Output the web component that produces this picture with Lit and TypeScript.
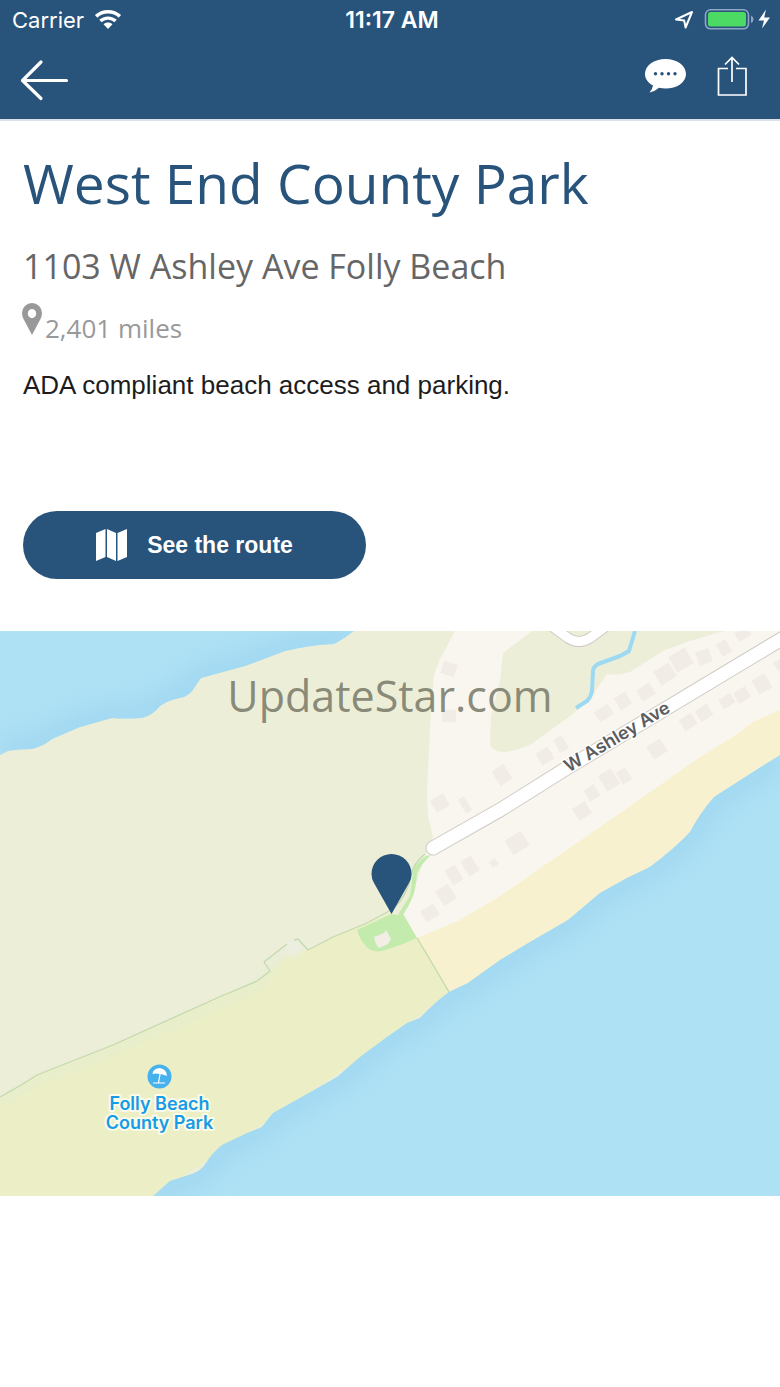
import { LitElement, html, svg, css } from "lit";
import { customElement, property } from "lit/decorators.js";

const COAST_NORTH =
  "M0 124L8 120Q18 118 32 118Q44 115 52 108L80 96L112 87Q124 88 142 87Q153 84 160 75Q168 69 184 66Q192 62 194 57L201 47L245 35L285 20Q310 14 334 13Q344 8 354 0";
const COAST_SOUTH =
  "M780 124L753 141L714 166Q700 182 690 201Q672 220 650 236L627 247L600 262L568 289L530 311L500 329L468 352L449 361Q434 372 420 387L407 392L387 406L360 426L337 446L300 467L273 482Q268 488 262 496L247 502L222 514Q212 522 206 532Q201 540 192 543L170 550L153 565";
const BOUNDARY = "M0 466Q22 454 37 444L113 414L217 367L257 350L270 340L264 331L287 313M294 309L298 308L308 319L333 306L367 292L391 279";

// Building footprints: x, y, width, height, rotation
const BUILDINGS = [
  [449, 38, 14, 13, 20], [449, 85, 14, 12, 0], [440, 172, 15, 14, -30], [465, 174, 7, 16, -30],
  [502, 144, 14, 17, -32], [545, 125, 14, 14, -30], [561, 113, 10, 15, -30], [604, 82, 16, 12, -32],
  [623, 70, 13, 14, -32], [646, 61, 15, 13, -32], [665, 43, 18, 16, -32], [681, 29, 19, 18, -30],
  [704, 26, 14, 14, -20], [724, 17, 11, 14, -30], [743, 3, 14, 10, -32], [688, 91, 14, 13, -32],
  [704, 82, 14, 13, -32], [727, 70, 14, 11, -32], [742, 64, 14, 12, -32], [762, 53, 15, 16, -30],
  [779, 34, 8, 10, -30], [657, 118, 16, 15, -32], [624, 145, 11, 14, -32], [609, 149, 15, 18, -32],
  [592, 162, 12, 13, -32], [582, 180, 15, 14, -32], [517, 212, 19, 17, -32], [494, 232, 7, 7, -40],
  [470, 235, 12, 17, -32], [454, 244, 12, 17, -32], [446, 264, 15, 17, -32], [430, 282, 15, 13, -32],
];

@customElement("status-bar")
export class StatusBar extends LitElement {
  @property() time = "";

  static styles = css`
    :host {
      display: grid;
      grid-template-columns: 1fr auto 1fr;
      align-items: center;
      height: 40px;
      padding: 0 8px 0 12px;
      color: #fff;
      font: 400 22px/40px Inter, "Liberation Sans", sans-serif;
    }
    .side { display: flex; align-items: center; gap: 10px; }
    .end { justify-content: flex-end; }
    .time { font-size: 23px; font-weight: 600; }
    svg { display: block; }
  `;

  render() {
    return html`
      <div class="side">
        <span>Carrier</span>
        <svg width="28" height="20" viewBox="0 0 28 20" aria-hidden="true">
          <path fill="#fff" d="M14 0C8.900 0 4.300 1.900 .9 5.100L3.400 7.700C6.200 5.100 9.900 3.600 14 3.600S21.800 5.100 24.600 7.700L27.100 5.100C23.700 1.900 19.100 0 14 0ZM14 6.500C10.600 6.500 7.500 7.800 5.200 9.800L7.700 12.200C9.400 10.700 11.600 9.800 14 9.800S18.600 10.700 20.300 12.200L22.800 9.800C20.500 7.800 17.400 6.500 14 6.500ZM14 12.500C12.200 12.500 10.700 13.200 9.500 14.200L14 19L18.500 14.200C17.300 13.200 15.800 12.500 14 12.500Z"/>
        </svg>
      </div>
      <span class="time">${this.time}</span>
      <div class="side end">
        <svg width="20" height="20" viewBox="0 0 20 20" aria-hidden="true">
          <path fill="none" stroke="#fff" stroke-width="2" stroke-linejoin="round" d="M2 9.500L18 2L11.600 17.500L10.200 10.600Z"/>
        </svg>
        <svg width="68" height="22" viewBox="0 0 68 22" aria-hidden="true">
          <rect x="1.500" y="0.800" width="43" height="19" rx="5" fill="none" stroke="#8fa5c3" stroke-width="1.600"/>
          <rect x="4" y="3" width="38" height="14.500" rx="2.500" fill="#4cd964"/>
          <path d="M47 6.500Q49.500 7.500 49.500 10.200T47 14Z" fill="#8fa5c3"/>
          <path d="M62 0.500L54.500 11.500H60L58 19.500L66 8.500H60.200Z" fill="#fff"/>
        </svg>
      </div>
    `;
  }
}

@customElement("park-map")
export class ParkMap extends LitElement {
  static styles = css`
    :host { display: block; }
    .map { display: block; width: 100%; height: auto; }
    .road-name { font: 600 18px Inter, "Liberation Sans", sans-serif; fill: #5c5c5e; stroke: #fff; stroke-width: 3px; paint-order: stroke; }
    .place { font: 600 18px Inter, "Liberation Sans", sans-serif; fill: #169be6; stroke: #fbfbe9; stroke-width: 4px; stroke-linejoin: round; paint-order: stroke; }
    .watermark { font: 400 43px "Open Sans", "Noto Sans", sans-serif; fill: #7f816f; fill-opacity: 0.92; }
  `;

  render() {
    return html`
      <svg class="map" viewBox="0 0 780 565" role="img" aria-label="Map of Folly Beach County Park">
        <defs>
          <clipPath id="north"><path d="${COAST_NORTH}L0 0Z"/></clipPath>
          <clipPath id="south"><path d="${COAST_SOUTH}H780Z"/></clipPath>
          <filter id="soft" x="-10%" y="-20%" width="120%" height="140%"><feGaussianBlur stdDeviation="13"/></filter>
          <filter id="haze"><feGaussianBlur stdDeviation="3"/></filter>
        </defs>
        <rect width="780" height="565" fill="#eceed8"/>
        <path fill="#f9f6ef" d="M455 0L440 28L434 44L431 80L427 160L428 185L433 206L425 225L415 255L404 284L417 307L600 250L780 100V0Z"/>
        <path fill="#eceed8" d="M532 0L503 22L500 50L491 85L490 112Q491 121 504 121Q524 119 537 109L573 83L590 68L607 43Q618 45 630 41L663 20L690 10L724 0Z"/>
        <path fill="none" stroke="#9cdaf4" stroke-width="4" stroke-linejoin="round" d="M635 0L629 20Q626 22 620 25L598 33Q593 36 593 40L592 60Q591 66 587 70L576 77"/>
        <path fill="#f8f1cf" d="M417 307L460 289L500 265L600 196L653 159L700 126L733 106L753 91L780 79V130L600 275L449 363Z"/>
        <path fill="#ecefc6" d="M0 466L37 444L113 414L217 367L257 350L270 340L290 320L308 319L333 306L367 292L391 282L417 307L449 361L387 410L153 565H0Z"/>
        <path fill="none" stroke="#e4ecd0" stroke-width="8" stroke-opacity=".6" filter="url(#haze)" d="M0 472L37 450L113 420L217 373L257 356L285 322"/>
        <path fill="#aee1f4" d="${COAST_NORTH}L0 0Z"/>
        <path fill="#aee1f4" d="${COAST_SOUTH}H780Z"/>
        <g fill="none" stroke="#98d2ef" stroke-width="26" stroke-opacity=".7">
          <g clip-path="url(#north)"><path filter="url(#soft)" d="${COAST_NORTH}"/></g>
          <g clip-path="url(#south)"><path filter="url(#soft)" d="${COAST_SOUTH}"/></g>
        </g>
        <g fill="#f1ece6">
          ${BUILDINGS.map(([x, y, w, h, r]) => svg`<rect x=${x - w / 2} y=${y - h / 2} width=${w} height=${h} transform="rotate(${r} ${x} ${y})"/>`)}
        </g>
        <path fill="#c3ebae" d="M357 299L391 283L398 284Q405 272 410 265Q412 250 413 240Q415 233 426 225L431 224Q422 232 417 242Q416 257 413 265Q408 277 403 283L417 307L403 313L382 320Q371 322 365 314Q360 309 357 299Z"/>
        <path fill="#f2eee6" d="M374 306L384 302L386 299L391 308L388 313L379 317L376 313Z"/>
        <circle cx="293" cy="317" r="9" fill="#eceee0" filter="url(#haze)"/>
        <path fill="none" stroke="#c3d9b0" stroke-width="1.300" stroke-linejoin="round" d="${BOUNDARY}"/>
        <path fill="none" stroke="#bfdbac" stroke-width="1.300" d="M417 307L432 332L449 361M391 279Q406 268 411 245Q413 232 425 223"/>
        <path fill="none" stroke="#cfccc6" stroke-width="11" d="M546 -9L568 7Q579 14 590 7L612 -9"/>
        <path fill="none" stroke="#fff" stroke-width="9" d="M546 -9L568 7Q579 14 590 7L612 -9"/>
        <path fill="none" stroke="#cdcac4" stroke-width="15" stroke-linecap="round" d="M433 217L500 179L567 137L790 3"/>
        <path fill="none" stroke="#fff" stroke-width="13" stroke-linecap="round" d="M433 217L500 179L567 137L790 3"/>
        <text class="road-name" text-anchor="middle" transform="translate(620 111) rotate(-31)">W Ashley Ave</text>
        <path fill="#28537b" d="M391.500 283L374 252Q371.500 248 371.500 243A20 20 0 0 1 411.500 243Q411.500 248 409 252Z"/>
        <circle cx="159.500" cy="445.500" r="12" fill="#46b1ec"/>
        <path fill="#fff" d="M152.500 443Q153 437.500 160 437Q166.500 438 167 445L163 443.500L160 443L156 442.500Z"/>
        <path fill="none" stroke="#fff" stroke-width="1.200" d="M161 438L158.500 451.500M153 452H165"/>
        <text class="place" text-anchor="middle" x="159.500" y="479">Folly Beach</text>
        <text class="place" text-anchor="middle" x="159.500" y="498">County Park</text>
        <text class="watermark" text-anchor="middle" x="390" y="81">UpdateStar.com</text>
      </svg>
    `;
  }
}

@customElement("app-root")
export class AppRoot extends LitElement {
  static styles = css`
    :host { display: block; min-height: 100vh; background: #fff; }
    .header { background: #28537b; border-bottom: 2px solid #dbe1ea; }
    .nav { display: flex; justify-content: space-between; align-items: center; height: 79px; padding: 0 28px 0 16px; box-sizing: border-box; }
    .actions { display: flex; gap: 24px; padding-bottom: 4px; }
    .icon { display: block; padding: 0; border: 0; background: none; color: #fff; cursor: pointer; }
    svg { display: block; }
    .details { padding: 32px 23px 52px; }
    .title { margin: 0; color: #28537b; font: 400 55px/60px "Open Sans", "Noto Sans", sans-serif; }
    .address { margin: 29px 0 0; color: #666; font: 400 34px/48px "Open Sans", "Noto Sans", sans-serif; }
    .distance { display: flex; gap: 3px; margin: 13px 0 0 -1px; color: #999; font: 400 26px/50px "Open Sans", "Noto Sans", sans-serif; }
    .about { margin: 16px 0 0; color: #1c1c1c; font: 400 26px/32px "Liberation Sans", Arial, sans-serif; }
    .route {
      display: flex; align-items: center; justify-content: center; gap: 20px;
      width: 343px; max-width: 100%; height: 68px; margin: 110px 0 0; padding: 0;
      border: 0; border-radius: 34px; background: #28537b; color: #fff; cursor: pointer;
      font: 700 23px/32px "Liberation Sans", Arial, sans-serif;
    }
  `;

  render() {
    return html`
      <header class="header">
        <status-bar time="11:17 AM"></status-bar>
        <nav class="nav">
          <button class="icon" type="button" aria-label="Back">
            <svg width="56" height="44" viewBox="0 0 56 44" fill="none" stroke="currentColor" stroke-width="3.200" stroke-linecap="round" stroke-linejoin="round">
              <path d="M25 4L6.500 22.500L25 40.500M7 22.500H50.500"/>
            </svg>
          </button>
          <div class="actions">
            <button class="icon" type="button" aria-label="Comments">
              <svg width="48" height="44" viewBox="0 0 48 44">
                <path fill="currentColor" d="M25.500 3C37 3 46 9.500 46 18S37 32.500 25.500 32.500Q22 32.500 19 31.800Q15 35.500 9.500 36.500Q12.500 33 13 29.500C8 27 5 22.800 5 18C5 9.500 14 3 25.500 3Z"/>
                <g fill="#28537b"><circle cx="15.500" cy="17.700" r="1.700"/><circle cx="22" cy="17.700" r="1.700"/><circle cx="28.500" cy="17.700" r="1.700"/><circle cx="35" cy="17.700" r="1.700"/></g>
              </svg>
            </button>
            <button class="icon" type="button" aria-label="Share">
              <svg width="40" height="44" viewBox="0 0 40 44" fill="none" stroke="currentColor" stroke-width="1.700">
                <path d="M16 12.500H6.500V39H34V12.500H24M20 26V2M13 8.500L20 1.500L27 8.500"/>
              </svg>
            </button>
          </div>
        </nav>
      </header>
      <main>
        <section class="details">
          <h1 class="title">West End County Park</h1>
          <p class="address">1103 W Ashley Ave Folly Beach</p>
          <p class="distance">
            <svg width="20" height="32" viewBox="0 0 20 32" aria-hidden="true">
              <path fill="#999" fill-rule="evenodd" d="M10 0A10 10 0 0 1 20 10Q20 13 18.500 16L10 32L1.500 16Q0 13 0 10A10 10 0 0 1 10 0ZM10 6A4.200 4.500 0 0 0 10 15A4.200 4.500 0 0 0 10 6Z"/>
            </svg>
            <span>2,401 miles</span>
          </p>
          <p class="about">ADA compliant beach access and parking.</p>
          <button class="route" type="button">
            <svg width="31" height="34" viewBox="0 0 31 34" aria-hidden="true" fill="#fff">
              <path d="M0 5L9.500 1V29L0 33ZM11 1L20 5V33L11 29ZM21.500 5L31 1V29L21.500 33Z"/>
            </svg>
            <span>See the route</span>
          </button>
        </section>
        <park-map></park-map>
      </main>
    `;
  }
}
